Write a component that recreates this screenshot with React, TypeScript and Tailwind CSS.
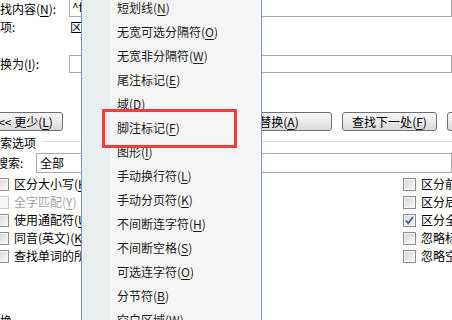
import type { ReactNode } from 'react';

const menuItems: [string, string][] = [
  ['短划线', 'N'],
  ['无宽可选分隔符', 'O'],
  ['无宽非分隔符', 'W'],
  ['尾注标记', 'E'],
  ['域', 'D'],
  ['脚注标记', 'F'],
  ['图形', 'I'],
  ['手动换行符', 'L'],
  ['手动分页符', 'K'],
  ['不间断连字符', 'H'],
  ['不间断空格', 'S'],
  ['可选连字符', 'O'],
  ['分节符', 'B'],
  ['空白区域', 'W'],
];

const leftOptions: { label: string; key: string; disabled?: boolean }[] = [
  { label: '区分大小写', key: 'H' },
  { label: '全字匹配', key: 'Y', disabled: true },
  { label: '使用通配符', key: 'U' },
  { label: '同音(英文)', key: 'K' },
  { label: '查找单词的所有形式(英文)', key: 'W' },
];

const rightOptions: { label: string; key: string; checked?: boolean }[] = [
  { label: '区分前缀', key: 'X' },
  { label: '区分后缀', key: 'T' },
  { label: '区分全/半角', key: 'M', checked: true },
  { label: '忽略标点符号', key: 'S' },
  { label: '忽略空格', key: 'W' },
];

const Key = ({ k }: { k: string }) => (
  <>
    (<span className="underline underline-offset-2">{k}</span>)
  </>
);

const CheckBox = ({ checked = false, disabled = false }: { checked?: boolean; disabled?: boolean }) => (
  <span
    className={
      disabled
        ? 'flex h-[13px] w-[13px] shrink-0 items-center justify-center border border-[#cacaca] bg-[#f6f6f6]'
        : 'flex h-[13px] w-[13px] shrink-0 items-center justify-center border border-[#8e8f8f] bg-linear-to-br from-[#d6d6d6] to-[#fafafa] shadow-[inset_0_0_0_1px_#f4f4f4]'
    }
  >
    {checked && (
      <svg width="9" height="9" viewBox="0 0 9 9">
        <path d="M1 4.5 L3.3 7.2 L8 1" fill="none" stroke="#4a5fa8" strokeWidth="1.8" />
      </svg>
    )}
  </span>
);

const Button = ({ className, children }: { className: string; children: ReactNode }) => (
  <div
    className={`flex h-[19px] shrink-0 items-center justify-center whitespace-nowrap rounded-[3px] border border-[#707070] bg-linear-to-b from-[#f7f7f7] via-[#ececec] to-[#d9d9d9] ${className}`}
  >
    {children}
  </div>
);

export default function App() {
  return (
    <div className="relative h-[320px] w-[452px] overflow-hidden bg-white font-['Noto_Sans_CJK_SC','Liberation_Sans',sans-serif] text-[12px] text-black">
      {/* dialog behind the menu */}
      <div className="-ml-[12px] flex w-[464px] flex-col">
        <div className="flex h-[18px]">
          <span className="w-[81px] shrink-0 whitespace-nowrap leading-[18px]">
            查找内容<Key k="N" />:
          </span>
          <div className="-mt-[5px] h-[22px] flex-1 border border-[#a7abb1] pl-[2px] pt-[2px] leading-[18px]">^f</div>
        </div>

        <div className="flex h-[18px] leading-[18px]">
          <span className="w-[81px] shrink-0">选项:</span>
          <span className="whitespace-nowrap pl-[1px]">区分全/半角</span>
        </div>

        <div className="mt-[19px] flex h-[18px]">
          <span className="w-[81px] shrink-0 whitespace-nowrap leading-[18px]">
            替换为<Key k="I" />:
          </span>
          <div className="h-[18px] flex-1 border border-[#a7abb1]" />
        </div>

        <div className="mt-[39px] flex h-[19px] leading-[17px]">
          <Button className="w-[75px]">
            &lt;&lt; 更少<Key k="L" />
          </Button>
          <Button className="ml-[139px] w-[130px]">
            全部替换<Key k="A" />
          </Button>
          <Button className="ml-[10px] w-[95px]">
            查找下一处<Key k="F" />
          </Button>
          <Button className="ml-[10px] w-[95px]">取消</Button>
        </div>

        <div className="mt-[4px] flex h-[16px]">
          <span className="whitespace-nowrap leading-[16px]">搜索选项</span>
          <div className="ml-[6px] mt-[6px] h-px flex-1 bg-[#d6dde3]" />
        </div>

        <div className="mt-[2px] flex h-[20px]">
          <span className="ml-[8px] w-[40px] shrink-0 leading-[20px]">搜索:</span>
          <div className="h-[20px] flex-1 border border-[#a7abb1] pl-[3px] leading-[18px]">全部</div>
        </div>

        <div className="mt-[2px] flex flex-col">
          {leftOptions.map((opt, i) => (
            <div key={opt.label} className="grid h-[18px] grid-cols-[415px_1fr] items-center">
              <div className="flex items-center gap-[5px] whitespace-nowrap pl-[8px]">
                <CheckBox disabled={opt.disabled} />
                <span className={opt.disabled ? 'text-[#a3a3a3]' : ''}>
                  {opt.label}
                  <Key k={opt.key} />
                </span>
              </div>
              <div className="flex items-center gap-[5px] whitespace-nowrap">
                <CheckBox checked={rightOptions[i].checked} />
                <span>
                  {rightOptions[i].label}
                  <Key k={rightOptions[i].key} />
                </span>
              </div>
            </div>
          ))}
        </div>

        <div className="mt-[48px] h-[16px] leading-[16px]">替换</div>
      </div>

      {/* special characters menu */}
      <div className="absolute left-[81px] top-[-5px] flex h-[340px] w-[181px] border border-[#7a9cca] bg-[#f5f5f5]">
        <div className="w-[28px] shrink-0 bg-[#e9eeee]" />
        <div className="flex flex-col">
          {menuItems.map(([label, key], i) => (
            <div key={i} className="flex h-[24px] items-center whitespace-nowrap pl-[7px] text-[#1b1b1b]">
              {label}
              <Key k={key} />
            </div>
          ))}
        </div>
      </div>

      {/* highlight box */}
      <div className="absolute left-[102px] top-[109px] h-[39px] w-[135px] border-[3px] border-[#f23b3b]" />
    </div>
  );
}
